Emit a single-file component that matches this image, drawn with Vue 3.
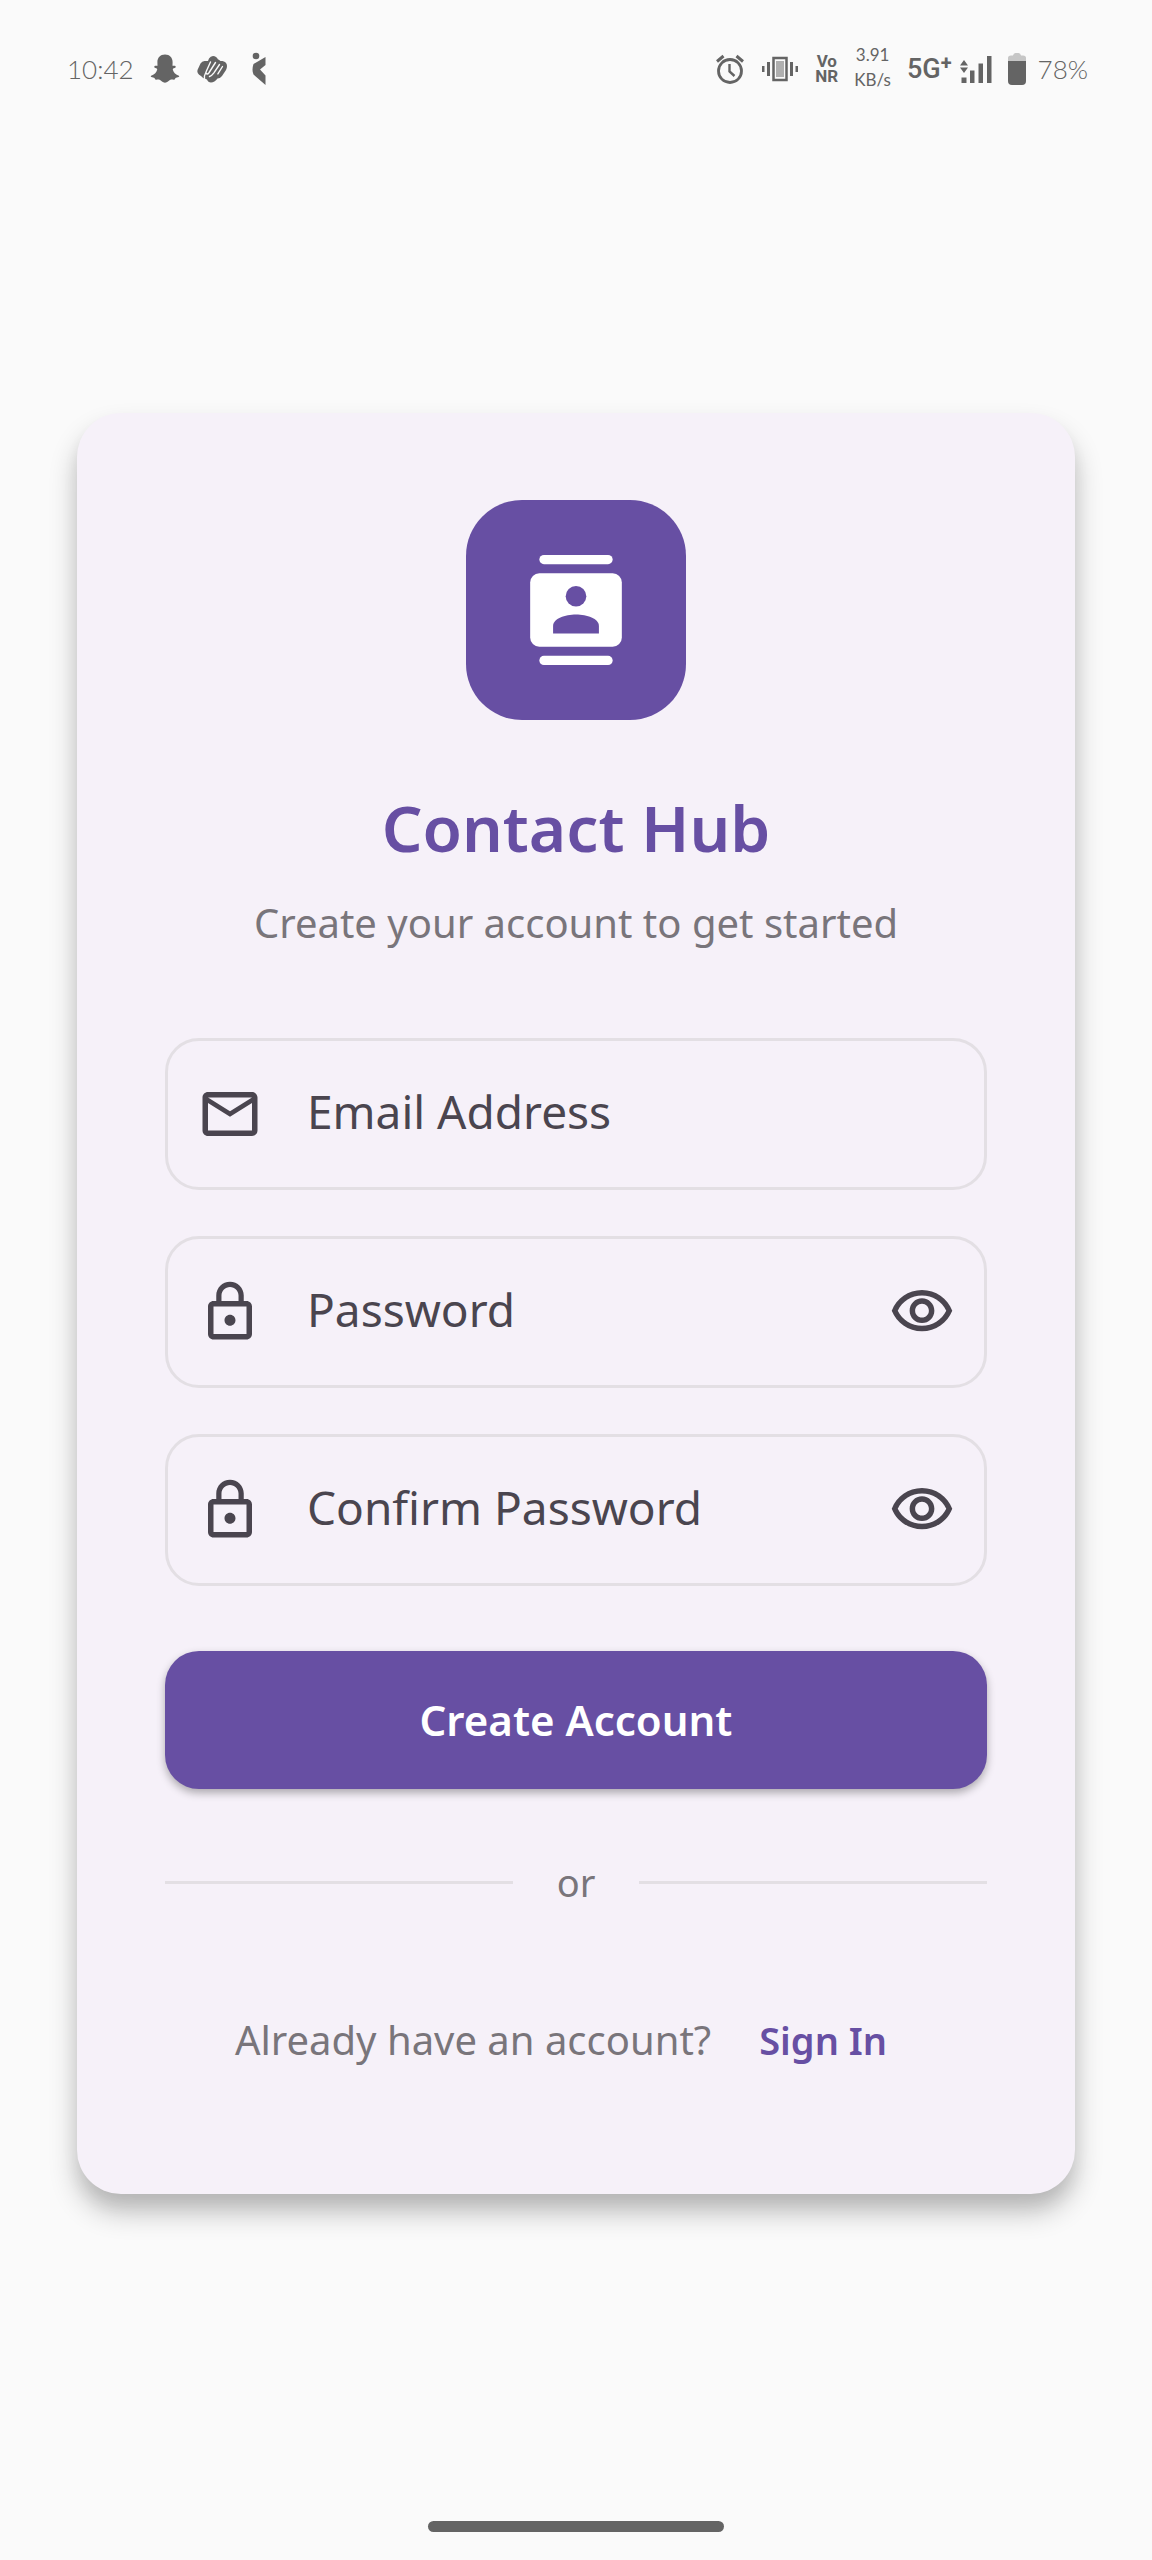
<script setup>
import { reactive } from 'vue'

const fields = reactive([
  { id: 'email', label: 'Email Address', icon: 'mail', secret: false, shown: true, value: '' },
  { id: 'password', label: 'Password', icon: 'lock', secret: true, shown: false, value: '' },
  { id: 'confirm', label: 'Confirm Password', icon: 'lock', secret: true, shown: false, value: '' },
])

const icons = {
  mail: 'M22 6c0-1.1-.9-2-2-2H4c-1.1 0-2 .9-2 2v12c0 1.1.9 2 2 2h16c1.1 0 2-.9 2-2V6zm-2 0l-8 5-8-5h16zm0 12H4V8l8 5 8-5v10z',
  lock: 'M12 17c1.1 0 2-.9 2-2s-.9-2-2-2-2 .9-2 2 .9 2 2 2zm6-9h-1V6c0-2.76-2.24-5-5-5S7 3.24 7 6v2H6c-1.1 0-2 .9-2 2v10c0 1.1.9 2 2 2h12c1.1 0 2-.9 2-2V10c0-1.1-.9-2-2-2zM8.9 6c0-1.71 1.39-3.1 3.1-3.1s3.1 1.39 3.1 3.1v2H8.9V6zM18 20H6V10h12v10z',
  eye: 'M12 6c3.79 0 7.17 2.13 8.82 5.5C19.17 14.87 15.79 17 12 17s-7.17-2.13-8.82-5.5C4.83 8.13 8.21 6 12 6m0-2C7 4 2.73 7.11 1 11.5 2.73 15.89 7 19 12 19s9.27-3.11 11-7.5C21.27 7.11 17 4 12 4zm0 5c1.38 0 2.5 1.12 2.5 2.5S13.38 14 12 14s-2.5-1.12-2.5-2.5S10.62 9 12 9m0-2c-2.48 0-4.5 2.02-4.5 4.5S9.52 16 12 16s4.5-2.02 4.5-4.5S14.48 7 12 7z',
}
</script>

<template>
  <div class="screen">
    <header class="status">
      <div class="status-left">
        <span class="clock">10:42</span>
        <svg width="30" height="30" viewBox="0 0 30 30" fill="currentColor" aria-hidden="true">
          <path d="M15 .5c4.800 0 7.600 3.300 7.600 7.700 0 1.500-.1 2.400-.1 3.500.9.500 1.900-.3 2.800.2.900.6.300 1.700-.7 2.200-1 .4-2 .6-1.800 1.500.6 2.700 2.700 5 5.500 6 1.100.4 1.300 1 .4 1.500-1.100.6-2.600.6-3.200.9-.5.500-.2 1.300-.9 1.600-1 .3-2.600-.3-4.200.2-1.700.7-2.900 2.900-5.400 2.900s-3.700-2.200-5.400-2.900c-1.600-.5-3.200.1-4.200-.2-.7-.3-.4-1.100-.9-1.600-.6-.3-2.100-.3-3.200-.9-.9-.5-.7-1.100.4-1.500 2.800-1 4.900-3.300 5.500-6 .2-.9-.8-1.100-1.800-1.500-1-.5-1.600-1.600-.7-2.200.9-.5 1.900.3 2.800-.2 0-1.100-.1-2-.1-3.500C7.400 3.800 10.200.5 15 .5z" />
        </svg>
        <svg width="32" height="28" viewBox="0 0 32 28" fill="currentColor" aria-hidden="true">
          <path d="M4.500 8.500Q6 6 8.500 6H12l1-2.500Q14.500 1 17 1q3.500 0 5 3.500h.5l2 1.500h2Q31 7 31 11q0 2-1 4l-4 6q-2 2.500-4.500 2.500-3 4-6.500 4-3 0-4-3-4-.5-6-3.500Q.5 18.500 1.500 15z" />
          <path d="M14.500 7 10.200 16.500c-1 2.400 1.300 3.300 2.600 1.500L19.500 7.500M8.500 25c-.6-3 0-5.500 1.500-8M23.500 9.500l-5.600 8.400c-1.400 1.900-2.500 3-4.400 3.600M26.500 11.500l-4.600 7.400" fill="none" stroke="#fafafa" stroke-width="1.400" stroke-linecap="round" />
        </svg>
        <svg class="runner" width="14" height="34" viewBox="0 0 14 34" fill="currentColor" aria-hidden="true">
          <circle cx="4" cy="4" r="3.300" />
          <path d="M13.500 5v8L8 17.500l5.500 6V33L1.500 22.500Q-.5 18 1.500 12z" />
        </svg>
      </div>

      <div class="status-right">
        <svg width="30" height="30" viewBox="0 0 30 30" fill="none" stroke="currentColor" aria-hidden="true">
          <circle cx="15" cy="17" r="11.500" stroke-width="2.800" />
          <path d="M14.500 10v7.500l5 4.500" stroke-width="2.400" />
          <path d="M2 7.500 8.500 2M28 7.500 21.500 2" stroke-width="3" />
        </svg>
        <svg width="38" height="26" viewBox="0 0 38 26" fill="currentColor" aria-hidden="true">
          <path d="M1 10h2.500v6H1zM6 6h3v14H6zM29 6h3v14h-3zM34.500 10H37v6h-2.500z" />
          <rect x="12.500" y="2" width="13" height="22" fill="#fafafa" stroke="currentColor" stroke-width="2.500" />
          <rect x="15" y="5" width="8" height="16" opacity=".5" />
        </svg>
        <span class="vonr">Vo<br />NR</span>
        <span class="speed">3.91<br />KB/s</span>
        <div class="network">
          <span class="gen">5G<sup>+</sup></span>
          <svg width="32" height="28" viewBox="0 0 32 28" fill="currentColor" aria-hidden="true">
            <path d="M0 10.500 4 5l4 5.500zM0 12.500h8L4 18zM1.500 22.500h5V28h-5zM10 15.500h4.500V28H10zM18.500 8.500H23V28h-4.500zM27 1h4.500v27H27z" />
          </svg>
        </div>
        <div class="battery">
          <svg width="18" height="34" viewBox="0 0 18 34" fill="currentColor" aria-hidden="true">
            <path d="M0 9V6q0-2.500 3-2.500h2Q5.500 1 7.500 1h3q2 0 2.500 2.500h2q3 0 3 2.500v3z" opacity=".35" />
            <path d="M0 9h18v20q0 4-4 4H4q-4 0-4-4z" />
          </svg>
          <span class="clock">78%</span>
        </div>
      </div>
    </header>

    <main class="content">
      <form class="card" @submit.prevent>
        <div class="logo">
          <svg width="110" height="110" viewBox="0 0 24 24" aria-hidden="true">
            <rect x="4" y="0" width="16" height="2" rx="1" fill="#fff" />
            <rect x="2" y="4" width="20" height="16" rx="2" fill="#fff" />
            <rect x="4" y="22" width="16" height="2" rx="1" fill="#fff" />
            <circle cx="12" cy="9" r="2.250" fill="#674fa3" />
            <path d="M7 17.100v-1.600c0-1.600 2.600-2.500 5-2.500s5 .9 5 2.500v1.600z" fill="#674fa3" />
          </svg>
        </div>
        <h1>Contact Hub</h1>
        <p class="subtitle">Create your account to get started</p>

        <div class="fields">
          <div v-for="f in fields" :key="f.id" class="field">
            <svg class="icon" viewBox="0 0 24 24" aria-hidden="true"><path :d="icons[f.icon]" /></svg>
            <div class="entry">
              <input :id="f.id" v-model="f.value" :type="f.secret ? (f.shown ? 'text' : 'password') : 'email'" />
              <label v-show="!f.value" :for="f.id">{{ f.label }}</label>
            </div>
            <button v-if="f.secret" type="button" class="toggle" aria-label="Show password" @click="f.shown = !f.shown">
              <svg class="icon" viewBox="0 0 24 24" aria-hidden="true"><path :d="icons.eye" /></svg>
            </button>
          </div>
        </div>

        <button type="submit" class="primary">Create Account</button>

        <div class="divider"><span>or</span></div>

        <div class="signin">
          <span>Already have an account?</span>
          <a href="#">Sign In</a>
        </div>
      </form>
    </main>

    <div class="home"></div>
  </div>
</template>

<style>
body {
  margin: 0;
  background: #fafafa;
}
</style>

<style scoped>
.screen {
  min-height: 100vh;
  display: flex;
  flex-direction: column;
  box-sizing: border-box;
  background: #fafafa;
  font-family: "Noto Sans", "Open Sans", sans-serif;
}

.status {
  height: 138px;
  padding: 0 64px 0 67px;
  display: flex;
  align-items: center;
  justify-content: space-between;
  color: #646464;
}

.status-left,
.status-right,
.network,
.battery {
  display: flex;
  align-items: center;
}

.status-left {
  gap: 16px;
}

.runner {
  margin-left: 8px;
}

.status-right {
  gap: 16px;
}

.network {
  gap: 8px;
}

.battery {
  gap: 12px;
}

.clock {
  font: 300 26px/36px Lato, sans-serif;
}

.vonr {
  font: 700 17px/15px Roboto, sans-serif;
  text-align: center;
}

.speed {
  padding-bottom: 4px;
  font: 400 17px/25px Lato, sans-serif;
  text-align: center;
}

.gen {
  display: flex;
  font: 500 27px/32px Roboto, sans-serif;
}

.gen sup {
  font-size: 20px;
  line-height: 20px;
  font-weight: 700;
}

.content {
  flex: 1;
  padding: 275px 77px 80px;
}

.card {
  display: flex;
  flex-direction: column;
  padding: 87px 88px 88px;
  border-radius: 44px;
  background: #f6f1f9;
  box-shadow: 0 18px 28px rgba(0, 0, 0, 0.24), 0 12px 16px rgba(0, 0, 0, 0.06);
}

.logo {
  align-self: center;
  width: 220px;
  height: 220px;
  border-radius: 56px;
  background: #674fa3;
  display: flex;
  align-items: center;
  justify-content: center;
}

h1 {
  margin: 64px 0 0;
  font-size: 64px;
  line-height: 88px;
  font-weight: 600;
  text-align: center;
  color: #674fa3;
}

.subtitle {
  margin: 22px 0 86px;
  font-size: 40px;
  line-height: 58px;
  text-align: center;
  color: #79757b;
}

.fields {
  display: flex;
  flex-direction: column;
  gap: 46px;
}

.field {
  display: flex;
  align-items: center;
  box-sizing: border-box;
  height: 152px;
  padding: 0 29px 0 29px;
  border: 3px solid #e3dfe4;
  border-radius: 34px;
}

.icon {
  display: block;
  flex: none;
  width: 66px;
  height: 66px;
  fill: #4a454f;
}

.entry {
  flex: 1;
  min-width: 0;
  display: grid;
  align-items: center;
  margin-left: 44px;
  padding-bottom: 6px;
}

.entry input,
.entry label {
  grid-area: 1 / 1;
  font: 400 46px/60px "Noto Sans", "Open Sans", sans-serif;
  color: #4a454f;
}

.entry input {
  width: 100%;
  height: 96px;
  box-sizing: border-box;
  padding: 0;
  border: 0;
  outline: 0;
  background: transparent;
}

.entry label {
  pointer-events: none;
}

.toggle {
  padding: 0;
  border: 0;
  background: none;
  cursor: pointer;
}

.primary {
  height: 138px;
  margin-top: 65px;
  border: 0;
  border-radius: 34px;
  background: #674fa3;
  color: #fff;
  font: 600 42px/60px "Noto Sans", "Open Sans", sans-serif;
  box-shadow: 0 4px 8px rgba(0, 0, 0, 0.3);
  cursor: pointer;
}

.divider {
  display: flex;
  align-items: center;
  gap: 44px;
  margin: 65px 0 64px;
  font-size: 38px;
  line-height: 56px;
  color: #79757b;
}

.divider::before,
.divider::after {
  content: "";
  flex: 1;
  height: 3px;
  background: #e3dfe4;
}

.signin {
  display: flex;
  align-items: center;
  justify-content: center;
  gap: 18px;
  height: 132px;
  font-size: 40px;
  line-height: 56px;
  color: #79757b;
}

.signin a {
  padding: 0 30px;
  color: #674fa3;
  font-size: 38px;
  font-weight: 600;
  text-decoration: none;
}

.home {
  align-self: center;
  width: 296px;
  height: 11px;
  margin-bottom: 28px;
  border-radius: 6px;
  background: #646464;
}
</style>
